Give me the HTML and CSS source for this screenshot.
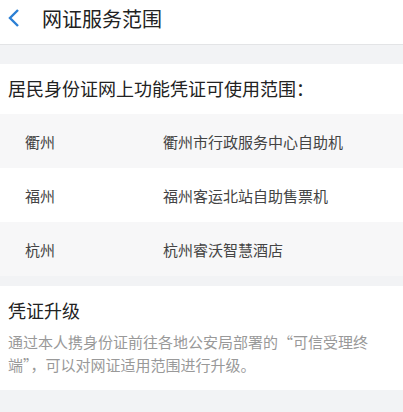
FILE: index.html
```html
<!DOCTYPE html>
<html lang="zh-CN">
<head>
  <meta charset="UTF-8" />
  <meta name="viewport" content="width=device-width, initial-scale=1.0"/>
  <title>网证服务范围</title>
  <link rel="stylesheet" href="styles.css">
</head>
<body>
  <div class="header">
    <svg class="back" width="12" height="18" viewBox="0 0 12 18">
      <path d="M10 1 L2 9 L10 17" fill="none" stroke="#2b7fd4" stroke-width="2.4"/>
    </svg>
    <h1>网证服务范围</h1>
  </div>
  <div class="gap"></div>
  <div class="section">
    <h2 class="section-title">居民身份证网上功能凭证可使用范围：</h2>
  </div>
  <div class="list">
    <div class="row shade">
      <span class="city">衢州</span>
      <span class="place">衢州市行政服务中心自助机</span>
    </div>
    <div class="row">
      <span class="city">福州</span>
      <span class="place">福州客运北站自助售票机</span>
    </div>
    <div class="row shade">
      <span class="city">杭州</span>
      <span class="place">杭州睿沃智慧酒店</span>
    </div>
  </div>
  <div class="gap small"></div>
  <div class="section upgrade">
    <h2 class="section-title">凭证升级</h2>
    <p class="desc">通过本人携身份证前往各地公安局部署的“可信受理终端”，可以对网证适用范围进行升级。</p>
  </div>
</body>
</html>
```

FILE: styles.css
```css
body {
  margin: 0;
  font-family: "Noto Sans CJK SC", "Noto Sans", sans-serif;
  background-color: #f2f3f5;
  color: #222;
}
.header {
  height: 44px;
  display: flex;
  align-items: center;
  background-color: #fff;
  border-bottom: 1px solid #e3e4e6;
}
.back {
  margin-left: 8px;
  margin-top: -8px;
}
.header h1 {
  margin: -8px 0 0 22px;
  font-size: 20px;
  font-weight: normal;
  color: #222;
}
.gap {
  height: 19px;
}
.gap.small {
  height: 10px;
}
.section {
  background-color: #fff;
  padding: 0 8px;
}
.section-title {
  margin: 0;
  font-size: 18px;
  font-weight: normal;
  height: 50px;
  line-height: 48px;
  color: #222;
}
.list {
  background-color: #fff;
}
.row {
  height: 54px;
  display: flex;
  align-items: center;
  font-size: 15px;
  color: #444;
}
.row.shade {
  background-color: #f7f7f8;
}
.city {
  width: 138px;
  padding-left: 25px;
}
.upgrade {
  padding-bottom: 14px;
}
.upgrade .section-title {
  height: 44px;
  line-height: 48px;
}
.desc {
  margin: 0;
  width: 370px;
  font-size: 15px;
  line-height: 23px;
  color: #999;
}
```
